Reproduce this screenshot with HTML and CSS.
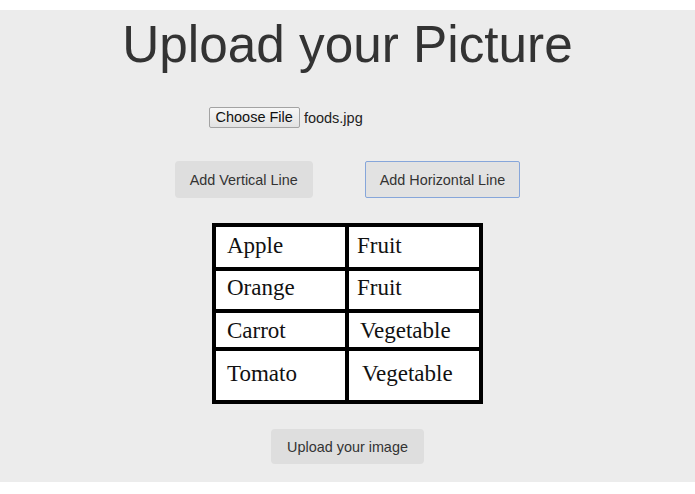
FILE: index.html
```html
<!DOCTYPE html>
<html lang="en">
<head>
<meta charset="utf-8">
<title>Upload your Picture</title>
<link rel="stylesheet" href="styles.css">
</head>
<body>
<main class="panel">
  <h1 class="title">Upload your Picture</h1>
  <div class="file-row">
    <div class="file-input">
      <button class="file-btn" type="button">Choose File</button>
      <span class="file-name">foods.jpg</span>
    </div>
  </div>
  <div class="actions">
    <button class="btn" type="button">Add Vertical Line</button>
    <button class="btn btn-focus" type="button">Add Horizontal Line</button>
  </div>
  <div class="grid-wrap">
    <div class="food-grid">
      <div class="cell r1">Apple</div>
      <div class="cell c2 r1">Fruit</div>
      <div class="cell r2">Orange</div>
      <div class="cell c2 r2">Fruit</div>
      <div class="cell r3">Carrot</div>
      <div class="cell c2 r3 shift">Vegetable</div>
      <div class="cell r4">Tomato</div>
      <div class="cell c2 r4 shift2">Vegetable</div>
    </div>
  </div>
  <div class="upload-row">
    <button class="btn btn-upload" type="button">Upload your image</button>
  </div>
</main>
</body>
</html>
```

FILE: styles.css
```css
html, body {
  margin: 0;
  padding: 0;
  background: #ffffff;
}

body {
  padding-top: 10px;
  height: 494px;
  box-sizing: border-box;
  font-family: "Liberation Sans", Arial, sans-serif;
  color: #333333;
}

.panel {
  background: #ececec;
  padding: 5px 0 18px;
  display: flex;
  flex-direction: column;
  align-items: center;
}

.title {
  margin: 0;
  font-size: 51.3px;
  line-height: 60px;
  font-weight: normal;
  color: #333333;
}

.file-row {
  margin-top: 32px;
  width: 278px;
  display: flex;
}

.file-input {
  display: flex;
  align-items: center;
  gap: 4px;
  height: 21px;
}

.file-btn {
  height: 21px;
  box-sizing: border-box;
  padding: 0 6px;
  border: 1px solid #a3a3a3;
  border-radius: 2px;
  background: linear-gradient(#f7f7f7, #e2e2e2);
  font-family: "Liberation Sans", Arial, sans-serif;
  font-size: 14.5px;
  color: #111111;
  line-height: 19px;
}

.file-name {
  font-size: 14.5px;
  color: #222222;
}

.actions {
  margin-top: 33px;
  display: flex;
  gap: 52px;
}

.btn {
  height: 37px;
  box-sizing: border-box;
  padding: 0 14px;
  border: 1px solid transparent;
  border-radius: 4px;
  background: #dedede;
  font-family: "Liberation Sans", Arial, sans-serif;
  font-size: 14.4px;
  color: #333333;
}

.btn-focus {
  background: #e2e2e2;
  border-color: #86a6da;
  border-radius: 2px;
}

.grid-wrap {
  margin-top: 25px;
}

.food-grid {
  display: grid;
  grid-template-columns: 129px 130px;
  grid-template-rows: 40px 38px 34px 49px;
  gap: 4px;
  padding: 4px;
  background: #000000;
}

.cell {
  background: #ffffff;
  font-family: "Liberation Serif", "Times New Roman", serif;
  font-size: 23px;
  line-height: 23px;
  color: #111111;
  padding-left: 11px;
}

.c2 {
  padding-left: 8px;
}

.shift {
  padding-left: 11px;
}

.shift2 {
  padding-left: 13px;
}

.r1 { padding-top: 7px; }
.r2 { padding-top: 5px; }
.r3 { padding-top: 6px; }
.r4 { padding-top: 11px; }

.upload-row {
  margin-top: 25px;
}

.btn-upload {
  height: 35px;
  padding: 0 15px;
}
```
